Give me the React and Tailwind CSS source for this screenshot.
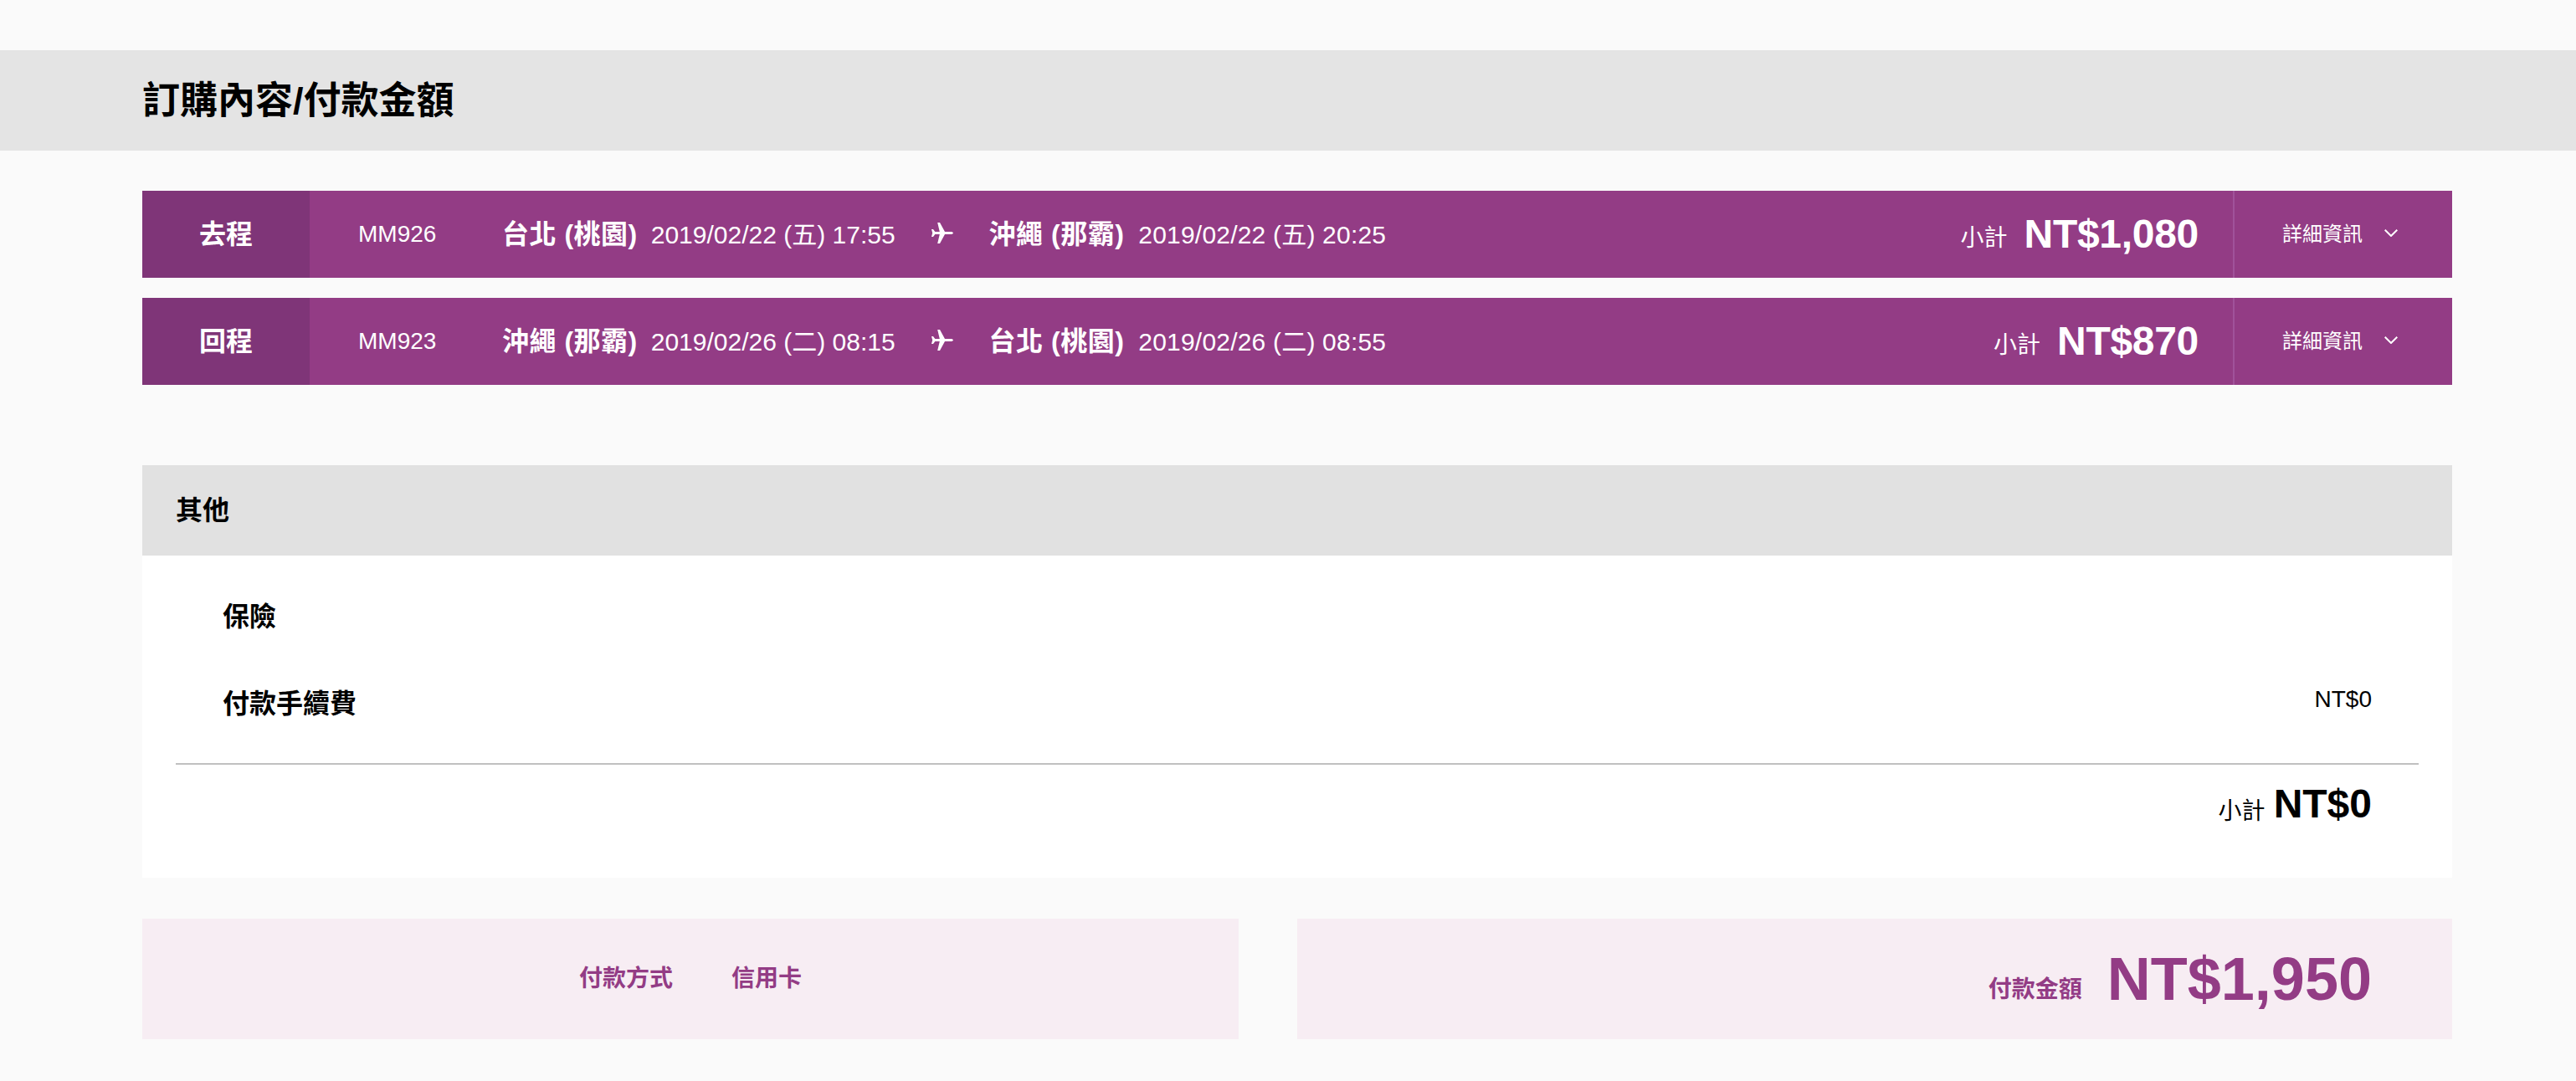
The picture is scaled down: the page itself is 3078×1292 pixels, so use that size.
const flights = [
  {
    dir: '去程',
    no: 'MM926',
    from: '台北 (桃園)',
    fromTime: '2019/02/22 (五) 17:55',
    to: '沖繩 (那霸)',
    toTime: '2019/02/22 (五) 20:25',
    price: 'NT$1,080',
  },
  {
    dir: '回程',
    no: 'MM923',
    from: '沖繩 (那霸)',
    fromTime: '2019/02/26 (二) 08:15',
    to: '台北 (桃園)',
    toTime: '2019/02/26 (二) 08:55',
    price: 'NT$870',
  },
]

function Plane() {
  return (
    <svg viewBox="0 0 26 25" className="mx-[43px] mb-[4px] h-[25px] w-[26px] shrink-0" fill="white">
      <path d="M26 12.5c0-.9-1.5-1.5-3-1.5h-7L10 0H7.2l2.6 11H4.3L2 8H0l1.2 4.5L0 17h2l2.3-3h5.5L7.2 25H10l6-11h7c1.5 0 3-.6 3-1.5z" />
    </svg>
  )
}

function FlightRow({ flight }) {
  return (
    <div className="flex h-[104px] items-center bg-[#933c85] text-white">
      <div className="flex h-full w-[200px] shrink-0 items-center justify-center bg-[#7f3578] text-[32px] font-semibold">
        {flight.dir}
      </div>
      <div className="w-[232px] shrink-0 pl-[58px] text-[28px]">{flight.no}</div>
      <div className="-ml-[2px] flex items-center">
        <span className="text-[32px] font-semibold tracking-[0.5px]">{flight.from}</span>
        <span className="ml-[16px] text-[30px]">{flight.fromTime}</span>
        <Plane />
        <span className="text-[32px] font-semibold tracking-[0.5px]">{flight.to}</span>
        <span className="ml-[17px] text-[30px] tracking-[0.2px]">{flight.toTime}</span>
      </div>
      <div className="ml-auto flex items-center gap-[20px] pr-[41px]">
        <span className="mt-[10px] text-[28px]">小計</span>
        <span className="text-[48px] font-bold leading-none tracking-[-0.3px]">{flight.price}</span>
      </div>
      <div className="flex h-full w-[262px] shrink-0 items-center border-l-2 border-[#a0529a] pl-[57px]">
        <span className="text-[24px]">詳細資訊</span>
        <svg viewBox="0 0 16 9" className="ml-[26px] mb-[4px] h-[9px] w-[16px]" fill="none" stroke="white" strokeWidth="2">
          <path d="M.7.7 8 8 15.3.7" />
        </svg>
      </div>
    </div>
  )
}

export default function App() {
  return (
    <div className="min-h-[1292px] bg-[#fafafa] pt-[60px] font-['Liberation_Sans','Noto_Sans_CJK_TC',sans-serif] text-black">
      <div className="flex h-[120px] items-center bg-[#e4e4e4] pl-[170px]">
        <h1 className="mt-[2px] text-[45px] font-bold">訂購內容/付款金額</h1>
      </div>

      <div className="ml-[170px] w-[2760px]">
        <div className="mt-[48px] flex flex-col gap-[24px]">
          {flights.map((f) => (
            <FlightRow key={f.no} flight={f} />
          ))}
        </div>

        <div className="mt-[96px] bg-white">
          <div className="flex h-[108px] items-center bg-[#e1e1e1] pl-[40px] text-[32px] font-semibold">其他</div>
          <div className="px-[40px] pt-[21px]">
            <div className="flex h-[104px] items-center pl-[56px] text-[32px] font-semibold">保險</div>
            <div className="flex h-[104px] items-center justify-between px-[56px]">
              <span className="text-[32px] font-semibold">付款手續費</span>
              <span className="mb-[10px] text-[28px]">NT$0</span>
            </div>
            <div className="mt-[19px] flex h-[137px] items-start justify-end border-t-2 border-[#c0c0c0] pt-[23px] pr-[56px]">
              <span className="mt-[12px] text-[28px]">小計</span>
              <span className="ml-[10px] text-[48px] font-bold leading-none">NT$0</span>
            </div>
          </div>
        </div>

        <div className="mt-[49px] flex gap-[70px] text-[#933c85]">
          <div className="flex h-[144px] w-[1310px] items-center gap-[70px] bg-[#f7edf3] pl-[522px] text-[28px] font-semibold">
            <span>付款方式</span>
            <span>信用卡</span>
          </div>
          <div className="flex h-[144px] w-[1380px] items-center justify-end gap-[30px] bg-[#f7edf3] pr-[96px]">
            <span className="mt-[26px] text-[28px] font-semibold">付款金額</span>
            <span className="text-[72px] font-bold leading-none">NT$1,950</span>
          </div>
        </div>
      </div>
    </div>
  )
}
